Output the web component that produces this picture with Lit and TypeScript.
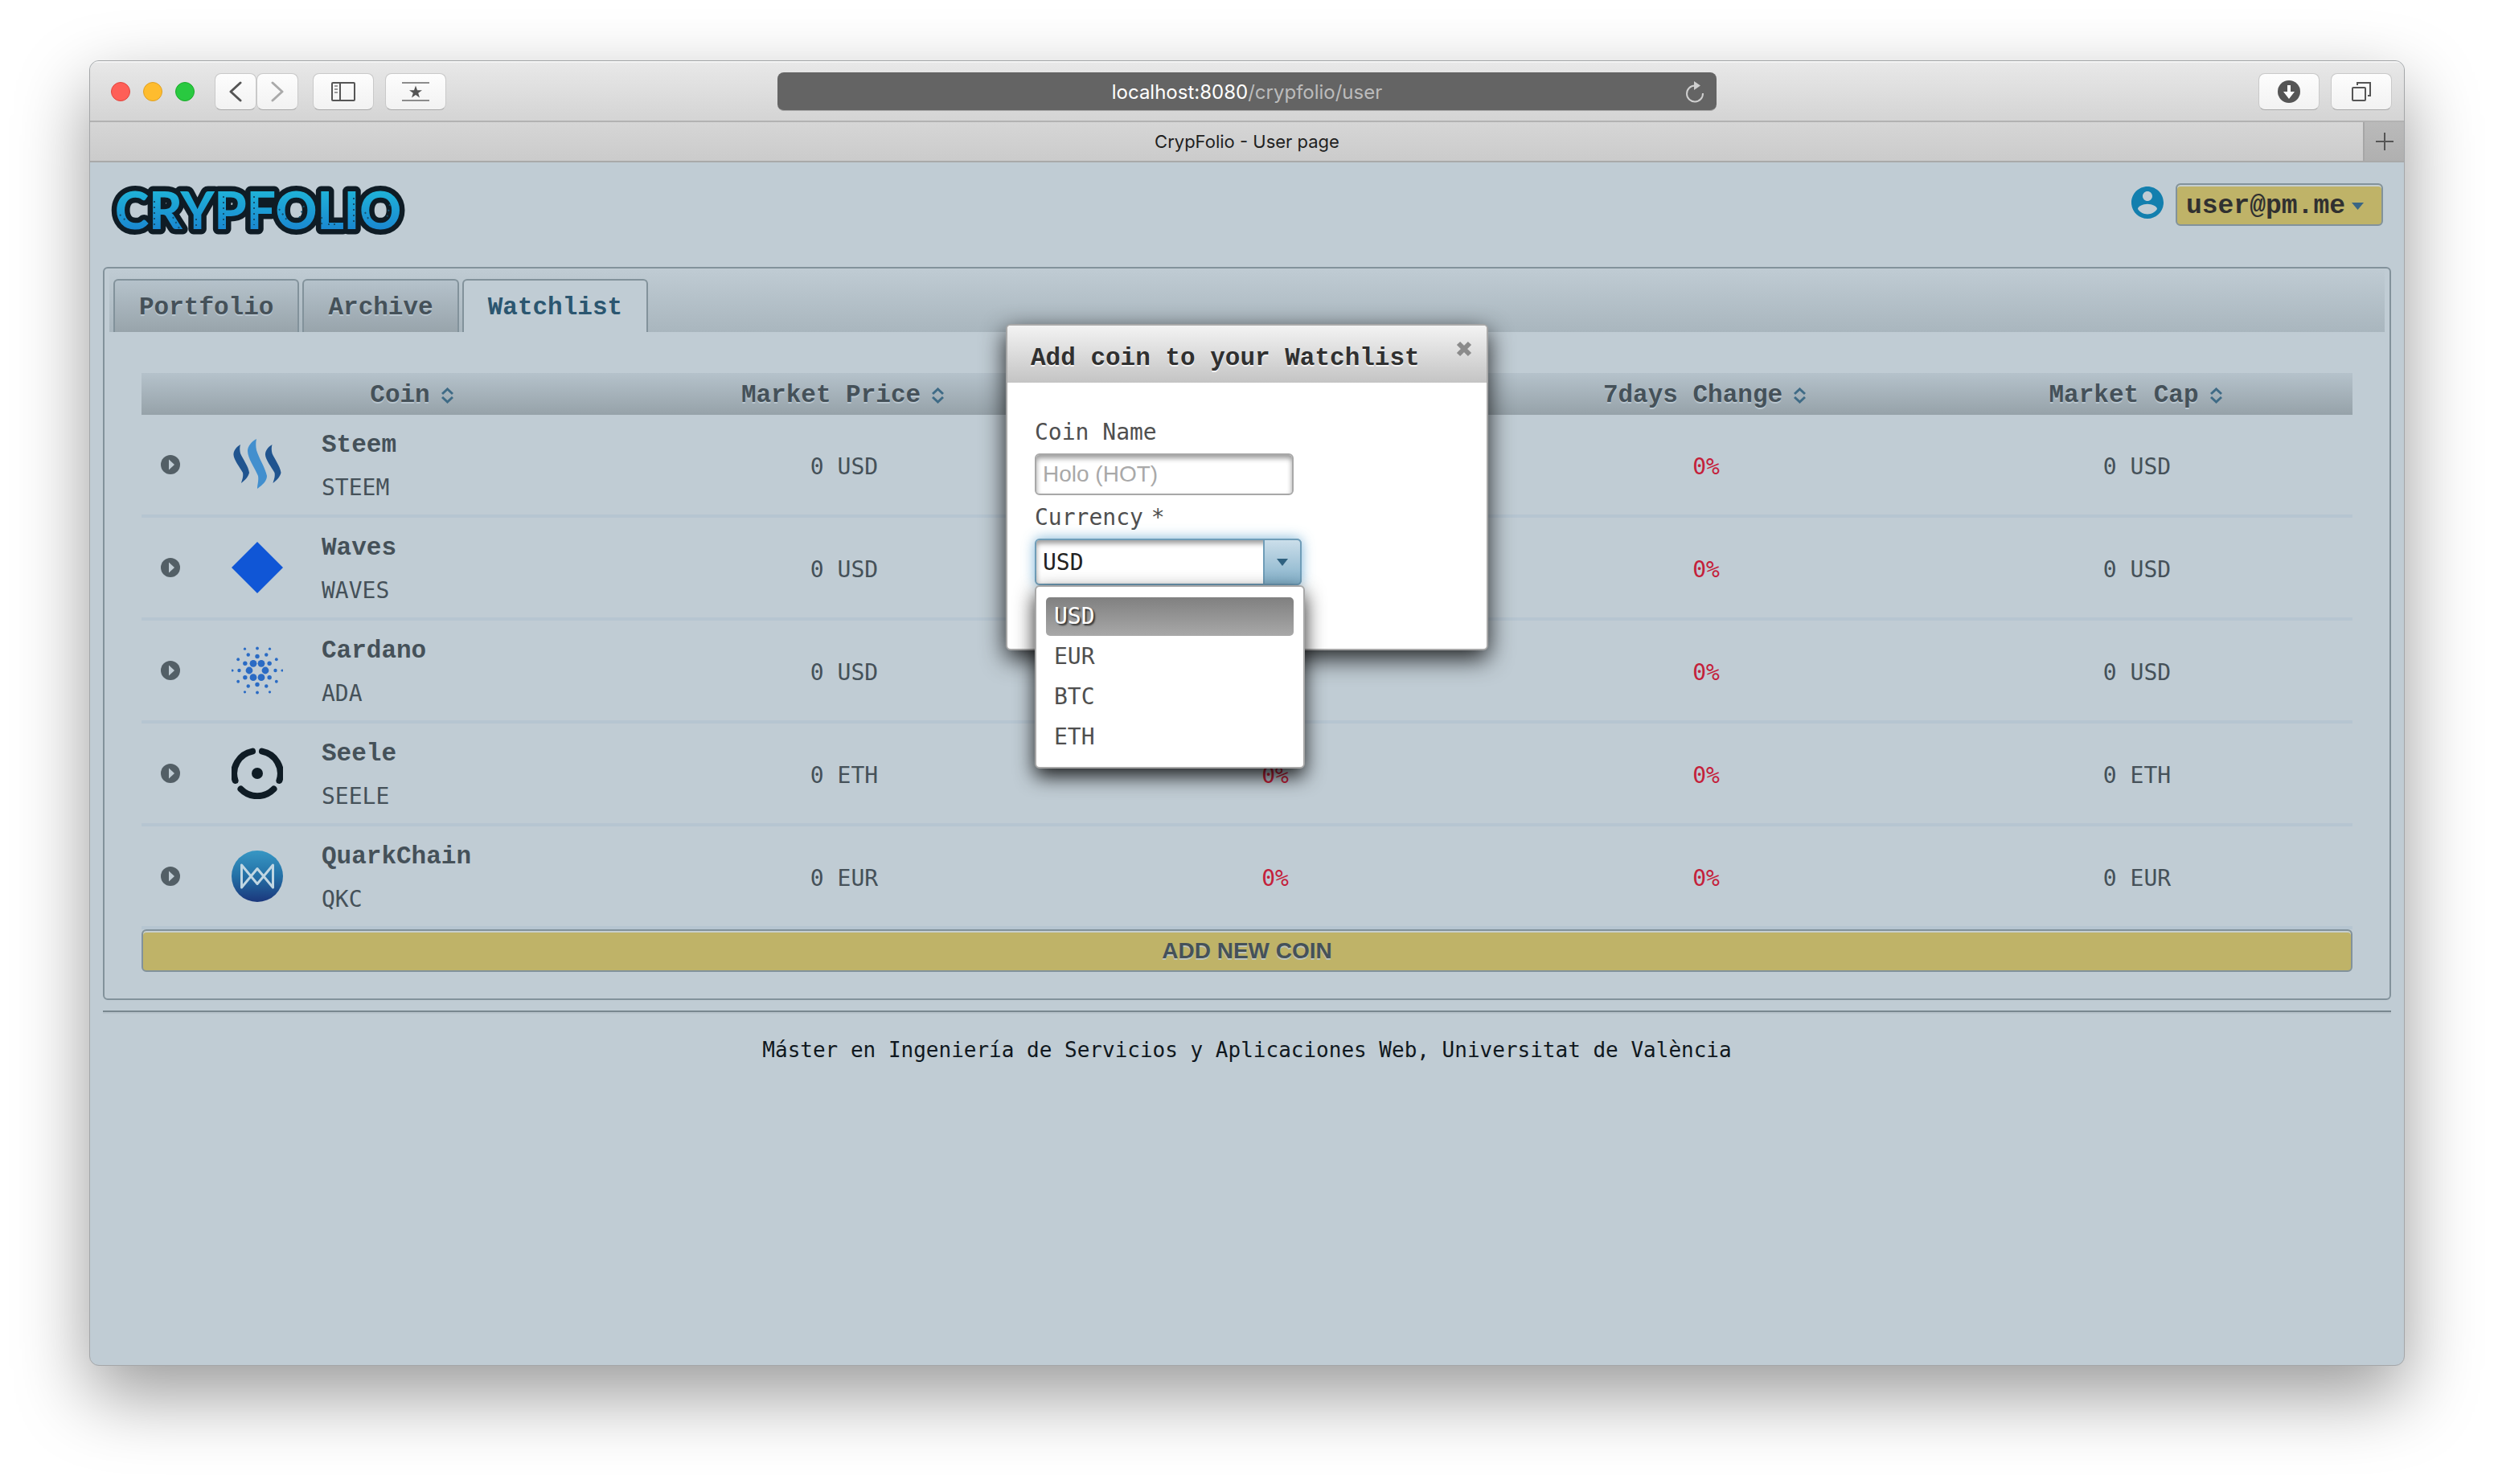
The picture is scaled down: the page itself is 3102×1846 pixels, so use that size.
import { LitElement, html, css, svg } from "lit";
import { customElement, property, state } from "lit/decorators.js";
import { classMap } from "lit/directives/class-map.js";

interface Coin {
  name: string;
  symbol: string;
  currency: string;
}

const COINS: Coin[] = [
  { name: "Steem", symbol: "STEEM", currency: "USD" },
  { name: "Waves", symbol: "WAVES", currency: "USD" },
  { name: "Cardano", symbol: "ADA", currency: "USD" },
  { name: "Seele", symbol: "SEELE", currency: "ETH" },
  { name: "QuarkChain", symbol: "QKC", currency: "EUR" },
];

const TABS = ["Portfolio", "Archive", "Watchlist"];
const COLUMNS = ["Coin", "Market Price", "24h Change", "7days Change", "Market Cap"];
const CURRENCIES = ["USD", "EUR", "BTC", "ETH"];

/** Rings of the Cardano mark: distance from the centre, dot radius, first angle, dot count. */
const ADA_RINGS = [
  [10, 4.4, 0, 6],
  [17.5, 2.7, 30, 6],
  [22.5, 2.2, 0, 6],
  [27.5, 1.9, 30, 6],
  [31, 1.6, 0, 6],
];

@customElement("coin-logo")
export class CoinLogo extends LitElement {
  static styles = css`
    :host {
      display: block;
    }
    .logo {
      display: block;
      width: 64px;
      height: 64px;
    }
  `;

  @property() symbol = "";

  private art() {
    switch (this.symbol) {
      case "STEEM":
        return svg`
          <path fill="#20548f" d="M11 7C6 10 2 15 2.500 20C3 26 10 35 14 42C15 47 13 51 12 55C17 51 21 47 22 42C21 34 14 25 11 18C10 14 10 10 11 7Z"/>
          <path fill="#20548f" transform="translate(39.500 0)" d="M11 7C6 10 2 15 2.500 20C3 26 10 35 14 42C15 47 13 51 12 55C17 51 21 47 22 42C21 34 14 25 11 18C10 14 10 10 11 7Z"/>
          <path fill="#428fce" d="M31 0C25 3 20 9 20 15C20 24 29 36 33 46C34 52 32 57 32 62C39 57 44 52 44 46C42 36 34 24 31 14C30 9 30 4 31 0Z"/>`;
      case "WAVES":
        return svg`<path fill="#1056d6" d="M32 0L64 32L32 64L0 32Z"/>`;
      case "ADA":
        return svg`<g fill="#2a6bc4">${ADA_RINGS.map(([dist, r, start, count]) =>
          Array.from({ length: count }, (_, i) => {
            const angle = ((start + (360 / count) * i) * Math.PI) / 180;
            return svg`<circle cx=${32 + dist * Math.cos(angle)} cy=${32 + dist * Math.sin(angle)} r=${r} />`;
          })
        )}</g>`;
      case "SEELE":
        return svg`
          <g fill="none" stroke="#0f1c25" stroke-width="8" stroke-linecap="round">
            <path d="M38 4.600A28 28 0 0 1 59.400 41"/>
            <path d="M26 4.600A28 28 0 0 0 4.600 41"/>
            <path d="M11.500 51.500A28.500 28.500 0 0 0 52.500 51.500"/>
          </g>
          <circle cx="32" cy="32" r="7" fill="#0f1c25"/>`;
      default:
        return svg`
          <defs><linearGradient id="qkc" x1="0" y1="0" x2="0" y2="1">
            <stop offset="0" stop-color="#3797c4"/><stop offset=".5" stop-color="#2470a6"/><stop offset="1" stop-color="#1b377c"/>
          </linearGradient></defs>
          <circle cx="32" cy="32" r="32" fill="url(#qkc)"/>
          <path fill="none" stroke="#c0d6e2" stroke-width="3" stroke-linejoin="round" d="M12.500 18V46L32 22.500L51.500 46V18L32 41.500Z"/>`;
    }
  }

  render() {
    return html`<svg class="logo" viewBox="0 0 64 64" aria-hidden="true">${this.art()}</svg>`;
  }
}

@customElement("browser-chrome")
export class BrowserChrome extends LitElement {
  static styles = css`
    :host {
      display: block;
      font-family: Inter, "Liberation Sans", sans-serif;
    }
    .toolbar {
      display: grid;
      grid-template-columns: 1fr minmax(400px, 1168px) 1fr;
      align-items: center;
      height: 76px;
      padding: 0 15px;
      box-sizing: border-box;
      background: linear-gradient(#e8e8e8, #d4d4d4);
      border-bottom: 2px solid #b2b2b2;
      border-top: 2px solid #f4f4f4;
    }
    .side {
      display: flex;
      align-items: center;
    }
    .end {
      justify-content: flex-end;
      gap: 14px;
    }
    .lights {
      display: flex;
      gap: 16px;
      margin: 0 25px 0 11px;
    }
    .light {
      width: 24px;
      height: 24px;
      box-sizing: border-box;
      border-radius: 50%;
      border: 1px solid;
    }
    .red {
      background: #fe5f57;
      border-color: #e2443d;
    }
    .amber {
      background: #febc2e;
      border-color: #dfa023;
    }
    .green {
      background: #29c940;
      border-color: #1aab29;
    }
    .tool {
      display: flex;
      align-items: center;
      justify-content: center;
      width: 76px;
      height: 46px;
      padding: 0;
      border: 1px solid #c9c9c9;
      border-bottom-color: #a9a9a9;
      border-radius: 8px;
      background: linear-gradient(#fdfdfd, #f2f2f2);
      color: #555;
    }
    .nav {
      width: 52px;
    }
    .pair {
      display: flex;
      margin-right: 18px;
    }
    .group {
      display: flex;
      gap: 14px;
    }
    .faded {
      color: #aaa;
    }
    .address {
      display: grid;
      grid-template-columns: 40px 1fr 40px;
      align-items: center;
      height: 48px;
      padding-top: 2px;
      border-radius: 8px;
      background: #646464;
      border-bottom: 1px solid #a8a8a8;
      box-sizing: border-box;
      font-size: 24px;
      line-height: 32px;
      color: #bcbcbc;
      text-align: center;
    }
    .url {
      grid-column: 2;
    }
    .host {
      color: #fff;
    }
    .reload {
      display: flex;
      padding: 0;
      border: 0;
      background: none;
      color: #cfcfcf;
    }
    .tabs {
      display: flex;
      height: 50px;
      box-sizing: border-box;
      background: linear-gradient(#d6d6d6, #cbcbcb);
      border-bottom: 2px solid #a9a9a9;
    }
    .tab {
      flex: 1;
      padding-left: 51px;
      font-size: 22px;
      line-height: 48px;
      text-align: center;
      color: #1f1f1f;
    }
    .plus {
      display: flex;
      align-items: center;
      justify-content: center;
      width: 51px;
      padding: 0;
      border: 0;
      border-left: 2px solid #a6a6a6;
      background: linear-gradient(#bababa, #b0b0b0);
      color: #555;
    }
  `;

  render() {
    return html`
      <div class="toolbar">
        <div class="side">
          <div class="lights">
            <span class="light red"></span><span class="light amber"></span><span class="light green"></span>
          </div>
          <div class="pair">
            <button class="tool nav" aria-label="Back">
              <svg width="16" height="26" viewBox="0 0 16 26" fill="none" stroke="currentColor" stroke-width="3" stroke-linecap="round" stroke-linejoin="round"><path d="M14 2L2 13L14 24"/></svg>
            </button>
            <button class="tool nav faded" aria-label="Forward">
              <svg width="16" height="26" viewBox="0 0 16 26" fill="none" stroke="currentColor" stroke-width="3" stroke-linecap="round" stroke-linejoin="round"><path d="M2 2L14 13L2 24"/></svg>
            </button>
          </div>
          <div class="group">
            <button class="tool" aria-label="Sidebar">
              <svg width="30" height="24" viewBox="0 0 30 24" fill="none" stroke="currentColor" stroke-width="2"><rect x="1" y="1" width="28" height="22" rx="1"/><path d="M11 1V23"/><path stroke="#999" d="M4 5H8M4 9H8M4 13H8"/></svg>
            </button>
            <button class="tool" aria-label="Top sites">
              <svg width="34" height="24" viewBox="0 0 34 24"><path stroke="#8c8c8c" stroke-width="2" d="M0 1H34M0 23H34"/><path fill="currentColor" d="M17 4.500L19 10.200H25L20.200 13.800L22 19.500L17 16L12 19.500L13.800 13.800L9 10.200H15Z"/></svg>
            </button>
          </div>
        </div>
        <div class="address">
          <div class="url"><span class="host">localhost:8080</span>/crypfolio/user</div>
          <button class="reload" aria-label="Reload">
            <svg width="26" height="28" viewBox="0 0 26 28"><path d="M13 5.500A10 10 0 1 0 23 15" fill="none" stroke="currentColor" stroke-width="2"/><path d="M12 0L20 5.500L12 11Z" fill="currentColor"/></svg>
          </button>
        </div>
        <div class="side end">
          <button class="tool" aria-label="Downloads">
            <svg width="28" height="28" viewBox="0 0 28 28"><circle cx="14" cy="14" r="14" fill="currentColor"/><path fill="#fff" d="M12 6H16V14H21L14 23L7 14H12Z"/></svg>
          </button>
          <button class="tool" aria-label="Show tabs">
            <svg width="24" height="24" viewBox="0 0 24 24" fill="none" stroke="currentColor" stroke-width="2"><rect x="1" y="7" width="16" height="16" rx="1"/><path d="M7 4V1H23V17H20"/></svg>
          </button>
        </div>
      </div>
      <div class="tabs">
        <div class="tab">CrypFolio - User page</div>
        <button class="plus" aria-label="New tab">
          <svg width="22" height="22" viewBox="0 0 22 22" stroke="currentColor" stroke-width="2"><path d="M11 0V22M0 11H22"/></svg>
        </button>
      </div>
    `;
  }
}

@customElement("add-coin-dialog")
export class AddCoinDialog extends LitElement {
  static styles = css`
    :host {
      display: block;
      width: 600px;
      font-family: "DejaVu Sans Mono", "Liberation Mono", monospace;
      font-size: 28px;
      line-height: 32px;
      color: #4f4f4f;
    }
    .dialog {
      min-height: 406px;
      box-sizing: border-box;
      border: 2px solid #a8a8a8;
      border-radius: 6px;
      background: #fff;
      box-shadow: 0 10px 30px rgba(0, 0, 0, 0.85);
    }
    .head {
      display: flex;
      justify-content: space-between;
      align-items: flex-start;
      height: 71px;
      padding: 19px 18px 0 29px;
      box-sizing: border-box;
      border-radius: 4px 4px 0 0;
      background: linear-gradient(#f3f3f3, #c4c4c4);
    }
    .title {
      margin: 0;
      padding-top: 4px;
      font-family: "Liberation Mono", monospace;
      font-size: 31px;
      line-height: 36px;
      font-weight: 700;
      color: #303030;
      text-shadow: 0 2px 0 rgba(255, 255, 255, 0.8);
    }
    .close {
      display: flex;
      padding: 0;
      border: 0;
      background: none;
      color: #8b8b8b;
    }
    .form {
      display: flex;
      flex-direction: column;
      align-items: flex-start;
      padding: 46px 34px 30px;
    }
    .label {
      display: flex;
      gap: 10px;
      margin-bottom: 10px;
    }
    .input {
      width: 322px;
      height: 52px;
      margin: 0 0 12px;
      padding: 0 8px;
      box-sizing: border-box;
      border: 2px solid #a8a8a8;
      border-radius: 6px;
      background: #fff;
      box-shadow: inset 0 4px 6px rgba(0, 0, 0, 0.4);
      font-family: "Liberation Sans", sans-serif;
      font-size: 28px;
      color: #222;
    }
    .input::placeholder {
      color: #a9a9a9;
    }
    .combo {
      position: relative;
    }
    .select {
      display: block;
      width: 332px;
      height: 58px;
      padding: 0 8px;
      box-sizing: border-box;
      appearance: none;
      border: 2px solid #6f9db8;
      border-radius: 6px;
      background: #fff;
      box-shadow: inset 0 4px 6px rgba(0, 0, 0, 0.4), 0 0 16px rgba(90, 160, 205, 0.8);
      font-family: "DejaVu Sans Mono", "Liberation Mono", monospace;
      font-size: 28px;
      color: #222;
      outline: none;
    }
    .trigger {
      position: absolute;
      top: 0;
      right: 0;
      display: flex;
      align-items: center;
      justify-content: center;
      width: 48px;
      height: 58px;
      box-sizing: border-box;
      border: 2px solid #6f9db8;
      border-radius: 0 6px 6px 0;
      background: linear-gradient(#cbdeea, #84b1ca);
      pointer-events: none;
      color: #2f6180;
    }
    .list {
      position: absolute;
      top: 58px;
      left: 0;
      display: flex;
      flex-direction: column;
      gap: 2px;
      width: 336px;
      margin: 0;
      padding: 13px 12px;
      box-sizing: border-box;
      border: 2px solid #a8a8a8;
      border-radius: 6px;
      background: #fff;
      box-shadow: 0 10px 24px rgba(0, 0, 0, 0.85);
      list-style: none;
    }
    .option {
      padding: 8px 10px;
      border-radius: 5px;
    }
    .chosen {
      background: linear-gradient(#808080, #a8a8a8);
      color: #fff;
      text-shadow: 2px 2px 2px rgba(0, 0, 0, 0.7);
    }
  `;

  @state() private currency = "USD";

  private pick(value: string) {
    this.currency = value;
  }

  render() {
    return html`
      <section class="dialog" role="dialog" aria-labelledby="title">
        <header class="head">
          <h2 class="title" id="title">Add coin to your Watchlist</h2>
          <button class="close" aria-label="Close">
            <svg width="20" height="20" viewBox="0 0 20 20" stroke="currentColor" stroke-width="6"><path d="M3 3L17 17M17 3L3 17"/></svg>
          </button>
        </header>
        <form class="form">
          <label class="label" for="coin">Coin Name</label>
          <input class="input" id="coin" type="text" placeholder="Holo (HOT)" />
          <label class="label" for="currency"><span>Currency</span><span>*</span></label>
          <div class="combo">
            <select
              class="select"
              id="currency"
              .value=${this.currency}
              @change=${(e: Event) => this.pick((e.target as HTMLSelectElement).value)}
            >
              ${CURRENCIES.map((c) => html`<option value=${c}>${c}</option>`)}
            </select>
            <span class="trigger">
              <svg width="14" height="9" viewBox="0 0 14 9" fill="currentColor"><path d="M0 0H14L7 9Z"/></svg>
            </span>
            <ul class="list" role="listbox" aria-label="Currency">
              ${CURRENCIES.map(
                (c) => html`<li
                  class=${classMap({ option: true, chosen: c === this.currency })}
                  role="option"
                  aria-selected=${c === this.currency}
                  @click=${() => this.pick(c)}
                >${c}</li>`
              )}
            </ul>
          </div>
        </form>
      </section>
    `;
  }
}

@customElement("app-root")
export class AppRoot extends LitElement {
  static styles = css`
    :host {
      display: block;
      min-height: 100vh;
      padding: 75px 111px 147px;
      box-sizing: border-box;
      background: #fff;
      font-family: "DejaVu Sans Mono", "Liberation Mono", monospace;
      font-size: 28px;
      line-height: 32px;
      color: #455159;
    }
    .window {
      position: relative;
      min-height: calc(100vh - 222px);
      box-sizing: border-box;
      border: 1px solid #a4a6a8;
      border-radius: 12px;
      background: #c0ccd4;
      box-shadow: 0 36px 90px rgba(0, 0, 0, 0.4);
    }
    .chrome {
      overflow: hidden;
      border-radius: 11px 11px 0 0;
    }
    .page {
      padding: 18px 16px 30px;
    }
    .top {
      display: flex;
      justify-content: space-between;
      align-items: flex-start;
      height: 112px;
      padding: 0 10px 0 4px;
    }
    .brand {
      display: block;
      width: 380px;
      height: 84px;
    }
    .brand-text {
      font-family: Lato, Roboto, "Liberation Sans", sans-serif;
      font-size: 64px;
      font-weight: 900;
    }
    .account {
      display: flex;
      align-items: flex-start;
      gap: 15px;
      padding-top: 8px;
    }
    .avatar {
      display: block;
      margin-top: 4px;
    }
    .gold {
      border: 2px solid #82929b;
      border-radius: 6px;
      background: #bfb368;
      box-shadow: inset 0 2px 0 #c6cfd0;
    }
    .user {
      display: flex;
      align-items: center;
      gap: 8px;
      height: 53px;
      padding: 3px 22px 0 11px;
      font-family: "Liberation Mono", monospace;
      font-size: 33px;
      font-weight: 700;
      color: #303030;
    }
    .caret {
      color: #3a6684;
    }
    .panel {
      padding: 2px 6px 33px;
      border: 2px solid #82929b;
      border-radius: 6px;
    }
    .tabs {
      display: flex;
      align-items: flex-end;
      gap: 4px;
      height: 77px;
      padding: 0 5px;
      background: linear-gradient(#bfcbd3, #a9b6be);
    }
    .tab {
      height: 66px;
      padding: 4px 30px 0;
      border: 2px solid #82929b;
      border-bottom: 0;
      border-radius: 6px 6px 0 0;
      background: linear-gradient(#b5c2cb, #98a4ab);
      text-shadow: 0 2px 0 #b9c6cf;
    }
    .active {
      background: #c0ccd4;
      text-shadow: none;
    }
    .strong {
      font-family: "Liberation Mono", monospace;
      font-size: 31px;
      font-weight: 700;
      line-height: 36px;
      color: #455159;
    }
    .strong.active {
      color: #2b5670;
    }
    .content {
      padding: 51px 40px 0;
    }
    .table {
      width: 100%;
      table-layout: fixed;
      border-collapse: separate;
      border-spacing: 0;
      text-align: center;
    }
    .narrow {
      width: 70px;
    }
    .heads {
      background: linear-gradient(#b5c2cb, #96a2a9);
    }
    .th {
      height: 52px;
      padding: 0;
      text-shadow: 0 2px 0 #b9c6cf;
    }
    .sort {
      display: inline-flex;
      align-items: center;
      gap: 14px;
      padding: 4px 4px 0 0;
      border: 0;
      background: none;
      text-shadow: inherit;
    }
    .arrows {
      color: #3f6b86;
    }
    .td {
      height: 124px;
      padding: 0;
      border-bottom: 4px solid #b6c5d1;
    }
    .value {
      height: 119px;
      padding-top: 5px;
    }
    .toggle {
      display: inline-flex;
      padding: 0 0 0 2px;
      border: 0;
      background: none;
      color: #535f66;
    }
    .coin {
      display: flex;
      align-items: center;
      gap: 48px;
      padding-left: 42px;
      text-align: left;
    }
    .names {
      display: flex;
      flex-direction: column;
      gap: 19px;
      padding-top: 3px;
    }
    .down {
      color: #c4203a;
    }
    .add {
      display: block;
      width: 100%;
      height: 53px;
      padding: 0;
      font-family: "Liberation Sans", sans-serif;
      font-size: 28px;
      font-weight: 700;
      color: #455159;
      text-shadow: 0 2px 0 #bcc4bb;
    }
    .footer {
      margin-top: 13px;
      padding-top: 31px;
      border-top: 2px solid #78878f;
      box-shadow: inset 0 2px 0 #b7c3cb;
      font-size: 26px;
      text-align: center;
      color: #101820;
    }
    .modal {
      position: absolute;
      top: 327px;
      left: calc(50% - 300px);
    }
  `;

  @state() private tab = "Watchlist";

  private logo() {
    return html`
      <svg class="brand" viewBox="0 0 380 84" role="img" aria-label="Crypfolio">
        <defs>
          <linearGradient id="blue" x1="0" y1="0" x2="0" y2="1">
            <stop offset="0.2" stop-color="#1fb2d8" />
            <stop offset="0.85" stop-color="#1a86d0" />
          </linearGradient>
        </defs>
        <text class="brand-text" x="11" y="65" fill="url(#blue)" stroke="#0f1c25" stroke-width="13" stroke-linejoin="round" paint-order="stroke">CRYPFOLIO</text>
        <path fill="none" stroke="#14506f" stroke-width="2" stroke-dasharray="2 5" d="M17 47L25 55M60 30V62M83 50L91 64M112 52V62M146 24V60M184 24V60M215 40L225 54M246 36L240 52M268 50V64M276 59H288M308 26V60M322 44L328 56M353 34L349 52"/>
      </svg>
    `;
  }

  render() {
    return html`
      <div class="window">
        <browser-chrome class="chrome"></browser-chrome>
        <main class="page">
          <header class="top">
            ${this.logo()}
            <div class="account">
              <svg class="avatar" width="40" height="40" viewBox="2 2 20 20" fill="#137fae" aria-hidden="true">
                <path d="M12 2C6.480 2 2 6.480 2 12s4.480 10 10 10 10-4.480 10-10S17.520 2 12 2zm0 3c1.660 0 3 1.340 3 3s-1.340 3-3 3-3-1.340-3-3 1.340-3 3-3zm0 14.200c-2.500 0-4.710-1.280-6-3.220.030-1.990 4-3.080 6-3.080 1.990 0 5.970 1.090 6 3.080-1.290 1.940-3.500 3.220-6 3.220z"/>
              </svg>
              <button class="gold user">
                user@pm.me
                <svg class="caret" width="15" height="9" viewBox="0 0 15 9" fill="currentColor"><path d="M0 0H15L7.500 9Z"/></svg>
              </button>
            </div>
          </header>

          <section class="panel">
            <nav class="tabs">
              ${TABS.map(
                (t) => html`<button
                  class=${classMap({ tab: true, strong: true, active: t === this.tab })}
                  @click=${() => (this.tab = t)}
                >${t}</button>`
              )}
            </nav>
            <div class="content">
              <table class="table">
                <thead>
                  <tr class="heads">
                    <th class="th narrow" aria-label="Details"></th>
                    ${COLUMNS.map(
                      (c) => html`<th class="th">
                        <button class="sort strong">
                          ${c}
                          <svg class="arrows" width="15" height="20" viewBox="0 0 15 20" fill="none" stroke="currentColor" stroke-width="3"><path d="M1 8L7.500 2L14 8M1 12L7.500 18L14 12"/></svg>
                        </button>
                      </th>`
                    )}
                  </tr>
                </thead>
                <tbody>
                  ${COINS.map(
                    (c) => html`<tr>
                      <td class="td value">
                        <button class="toggle" aria-label="Expand ${c.name}">
                          <svg width="24" height="24" viewBox="0 0 24 24"><circle cx="12" cy="12" r="12" fill="currentColor"/><path fill="#c0ccd4" d="M10 5.500V18.500L17 12Z"/></svg>
                        </button>
                      </td>
                      <td class="td">
                        <div class="coin">
                          <coin-logo symbol=${c.symbol}></coin-logo>
                          <div class="names"><span class="strong">${c.name}</span><span>${c.symbol}</span></div>
                        </div>
                      </td>
                      <td class="td value">0 ${c.currency}</td>
                      <td class="td value down">0%</td>
                      <td class="td value down">0%</td>
                      <td class="td value">0 ${c.currency}</td>
                    </tr>`
                  )}
                </tbody>
              </table>
              <button class="gold add">ADD NEW COIN</button>
            </div>
          </section>
          <footer class="footer">Máster en Ingeniería de Servicios y Aplicaciones Web, Universitat de València</footer>
        </main>
        <add-coin-dialog class="modal"></add-coin-dialog>
      </div>
    `;
  }
}
